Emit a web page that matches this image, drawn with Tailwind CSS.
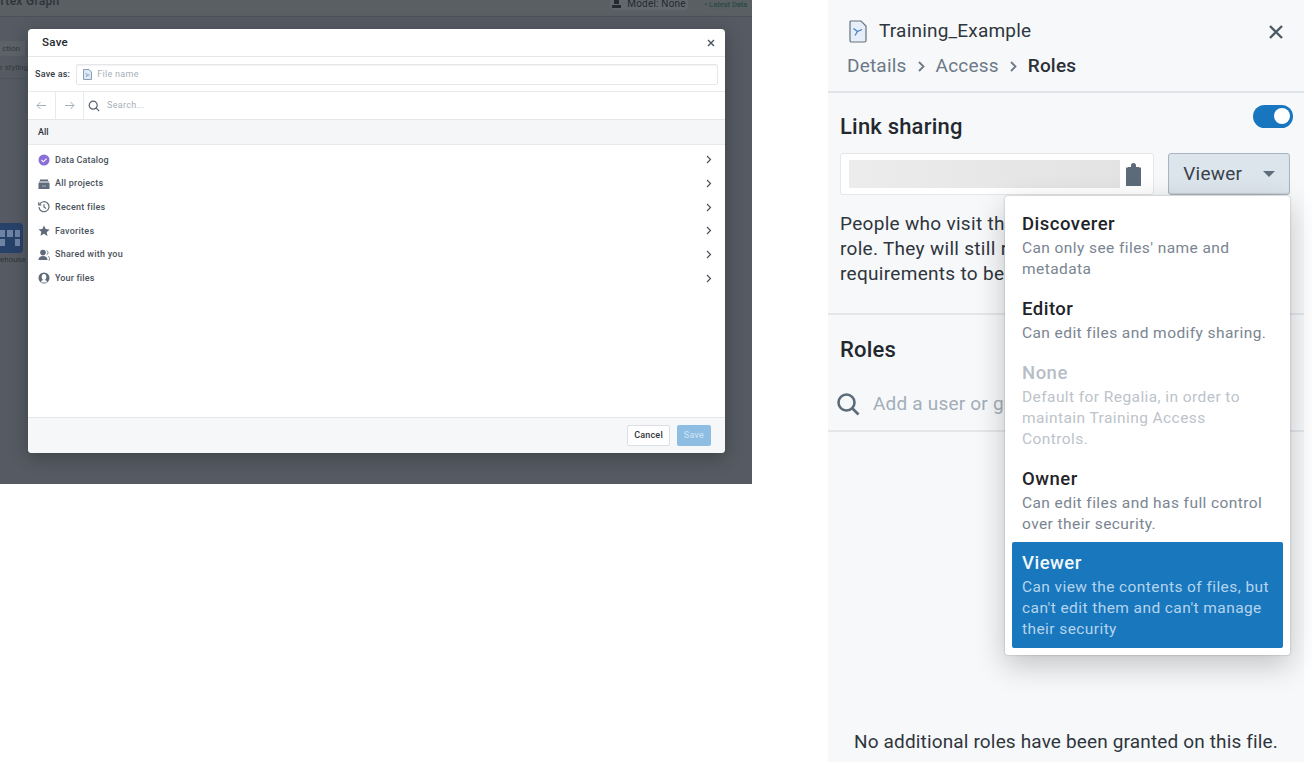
<!DOCTYPE html>
<html lang="en">
<head>
<meta charset="UTF-8">
<title>Save and Roles</title>
<script src="https://cdn.jsdelivr.net/npm/@tailwindcss/browser@4"></script>
</head>
<body class="bg-white font-['Roboto','Liberation_Sans',sans-serif] overflow-hidden">
<div class="w-[1312px] h-[764px] flex items-start">

  <!-- left: save dialog over the graph page -->
  <div class="relative w-[752px] h-[484px] shrink-0 bg-[#565b63] overflow-hidden">
    <div class="h-[17px] flex justify-between items-start border-b border-[#4c5157] bg-[#5a5f63]">
      <span class="text-[12px] leading-[12px] -ml-[14px] -mt-[5px] font-medium tracking-[0.3px] text-[#2f3338]">Vertex Graph</span>
      <div class="flex gap-[14px] pr-[2px]">
        <div class="h-[14px] w-[78px] -mt-[4px] flex items-center justify-center gap-[6px] bg-[#62676d] rounded-sm text-[10px] tracking-[0.2px] text-[#26292d]">
          <svg width="9" height="9" viewBox="0 0 9 9"><path d="M2 0h5v5H2zM0 6h9v3H0z" fill="#26292d"/></svg>
          <span>Model: None</span>
        </div>
        <div class="h-[16px] w-[48px] -mt-[4px] pt-[1px] flex items-center justify-center border border-[#566561] rounded-sm text-[7.5px] font-medium text-[#2b4a44]">• Latest Data</div>
      </div>
    </div>
    <div class="absolute left-0 top-[41px] w-[25px] h-[15px] bg-[#5d6269] text-[8px] text-[#33383e] flex items-center justify-end pr-[5px] overflow-hidden whitespace-nowrap">ction</div>
    <div class="absolute left-0 top-[62px] w-[28px] h-[17px] border-b border-[#4e5359] text-[8px] leading-[12px] text-[#33383e] overflow-hidden whitespace-nowrap text-right">r styling</div>
    <div class="absolute left-0 top-[223px] w-[23px] h-[30px] bg-[#27426a] rounded-r-sm grid grid-cols-3 gap-[2px] py-[7px] pr-[3px]">
      <span class="bg-[#6f83a3]"></span><span class="bg-[#6f83a3]"></span><span class="bg-[#6f83a3]"></span>
      <span class="bg-[#6f83a3]"></span><span class="bg-[#27426a]"></span><span class="bg-[#6f83a3]"></span>
    </div>
    <div class="absolute left-0 top-[255px] w-[26px] text-[8px] leading-[10px] text-[#2f3338] overflow-hidden whitespace-nowrap text-right">ehouse</div>

    <div class="absolute left-[28px] top-[29px] w-[697px] h-[424px] bg-white rounded-[4px] flex flex-col overflow-hidden shadow-[0_4px_18px_rgba(0,0,0,0.3)]">
      <div class="h-[28px] shrink-0 flex items-center justify-between pl-[14px] pr-[10px] border-b border-[#e4e6e9]">
        <span class="pt-[1px] text-[11.5px] font-medium tracking-[0.3px] text-[#23282e]">Save</span>
        <svg width="8" height="8" viewBox="0 0 8 8" fill="none" stroke="#4a525c" stroke-width="1.4"><path d="M1 1l6 6M7 1L1 7"/></svg>
      </div>
      <div class="h-[35px] shrink-0 flex items-center gap-[6px] pl-[7px] pr-[7px] border-b border-[#e8eaed]">
        <span class="pt-[1px] text-[9px] font-medium tracking-[0.2px] text-[#333a42]">Save as:</span>
        <div class="flex-1 h-[21px] flex items-center gap-[5px] pl-[6px] border border-[#e4e6e9] rounded-[2px] shadow-[inset_0_1px_1px_rgba(0,0,0,0.05)]">
          <svg width="9" height="11" viewBox="0 0 9 11" fill="#dfe9f5" stroke="#6d87a8" stroke-width="0.8"><path d="M0.5 0.5h5.5l2.5 2.5v7.5h-8z"/><path d="M2.5 4l2 2-1.5 2M4.5 6h2" fill="none"/></svg>
          <span class="pt-[1px] text-[9px] tracking-[0.3px] text-[#a7afb9]">File name</span>
        </div>
      </div>
      <div class="h-[28px] shrink-0 flex items-stretch border-b border-[#e4e6e9]">
        <div class="w-[28px] flex items-center justify-center border-r border-[#e8eaed]">
          <svg width="11" height="9" viewBox="0 0 11 9" fill="none" stroke="#a7afb9" stroke-width="1"><path d="M10 4.5H1M4.5 1L1 4.5 4.5 8"/></svg>
        </div>
        <div class="w-[28px] flex items-center justify-center border-r border-[#e8eaed]">
          <svg width="11" height="9" viewBox="0 0 11 9" fill="none" stroke="#a7afb9" stroke-width="1"><path d="M1 4.5h9M6.5 1L10 4.5 6.5 8"/></svg>
        </div>
        <div class="flex items-center gap-[7px] pl-[4px]">
          <svg width="12" height="12" viewBox="0 0 12 12" fill="none" stroke="#57616d" stroke-width="1.2"><circle cx="5.2" cy="5.2" r="4"/><path d="M8.2 8.2L11.2 11.2"/></svg>
          <span class="pt-[1px] text-[9px] tracking-[0.3px] text-[#a7afb9]">Search...</span>
        </div>
      </div>
      <div class="h-[25px] shrink-0 flex items-center pl-[10px] pt-[1px] bg-[#f5f6f8] border-b border-[#e8eaed] text-[9px] font-medium text-[#2e343b]">All</div>

      <div class="flex-1 pt-[3px] flex flex-col">
        <div class="h-[23.7px] flex items-center pl-[10px] pr-[13px] gap-[5px]">
          <svg width="12" height="12" viewBox="0 0 12 12"><circle cx="6" cy="6" r="5.5" fill="#8a6fd6"/><path d="M3.5 6l1.8 1.8L8.6 4.6" fill="none" stroke="#fff" stroke-width="1.1"/></svg>
          <span class="flex-1 pt-[1px] text-[9px] font-medium tracking-[0.15px] text-[#4a525c]">Data Catalog</span>
          <svg width="6" height="9" viewBox="0 0 6 9" fill="none" stroke="#4b535d" stroke-width="1.2"><path d="M1 1l3.5 3.5L1 8"/></svg>
        </div>
        <div class="h-[23.7px] flex items-center pl-[10px] pr-[13px] gap-[5px]">
          <svg width="12" height="12" viewBox="0 0 12 12" fill="#5f6b7a"><path d="M2 1.5h8v1.5H2zM1 3.5h10v1H1z"/><path d="M0.5 5h11v6h-11z"/><path d="M4 7.5h4v1H4z" fill="#a9b2bd"/></svg>
          <span class="flex-1 pt-[1px] text-[9px] font-medium tracking-[0.25px] text-[#4a525c]">All projects</span>
          <svg width="6" height="9" viewBox="0 0 6 9" fill="none" stroke="#4b535d" stroke-width="1.2"><path d="M1 1l3.5 3.5L1 8"/></svg>
        </div>
        <div class="h-[23.7px] flex items-center pl-[10px] pr-[13px] gap-[5px]">
          <svg width="12" height="12" viewBox="0 0 12 12" fill="none" stroke="#5f6b7a" stroke-width="1.2"><path d="M1.5 3.5A5 5 0 1 1 1 6"/><path d="M0.7 1.2v2.6h2.6"/><path d="M6 3.2V6l2 1.4"/></svg>
          <span class="flex-1 pt-[1px] text-[9px] font-medium tracking-[0.25px] text-[#4a525c]">Recent files</span>
          <svg width="6" height="9" viewBox="0 0 6 9" fill="none" stroke="#4b535d" stroke-width="1.2"><path d="M1 1l3.5 3.5L1 8"/></svg>
        </div>
        <div class="h-[23.7px] flex items-center pl-[10px] pr-[13px] gap-[5px]">
          <svg width="12" height="12" viewBox="0 0 12 12" fill="#5f6b7a"><path d="M6 0.5l1.7 3.6 3.9.5-2.9 2.7.8 3.9L6 8.8l-3.5 1.9.8-3.9L.4 4.6l3.9-.5z"/></svg>
          <span class="flex-1 pt-[1px] text-[9px] font-medium tracking-[0.25px] text-[#4a525c]">Favorites</span>
          <svg width="6" height="9" viewBox="0 0 6 9" fill="none" stroke="#4b535d" stroke-width="1.2"><path d="M1 1l3.5 3.5L1 8"/></svg>
        </div>
        <div class="h-[23.7px] flex items-center pl-[10px] pr-[13px] gap-[5px]">
          <svg width="12" height="12" viewBox="0 0 12 12" fill="#5f6b7a"><circle cx="5" cy="3.6" r="2.8"/><path d="M0.5 11c0-2.6 1.8-4 4.5-4s4.5 1.4 4.5 4z"/><path d="M8.6 1.5a2.4 2.4 0 0 1 0 4.4M10 7.2c1 .5 1.7 1.8 1.7 3.8h-1.2" fill="none" stroke="#5f6b7a" stroke-width="0.8"/></svg>
          <span class="flex-1 pt-[1px] text-[9px] font-medium tracking-[0.25px] text-[#4a525c]">Shared with you</span>
          <svg width="6" height="9" viewBox="0 0 6 9" fill="none" stroke="#4b535d" stroke-width="1.2"><path d="M1 1l3.5 3.5L1 8"/></svg>
        </div>
        <div class="h-[23.7px] flex items-center pl-[10px] pr-[13px] gap-[5px]">
          <svg width="12" height="12" viewBox="0 0 12 12"><circle cx="6" cy="6" r="5.5" fill="#5f6b7a"/><ellipse cx="6" cy="5" rx="2.3" ry="2.9" fill="#fff"/><path d="M2.8 10.4c.4-1.8 1.6-2.6 3.2-2.6s2.8.8 3.2 2.6z" fill="#fff"/></svg>
          <span class="flex-1 pt-[1px] text-[9px] font-medium tracking-[0.15px] text-[#4a525c]">Your files</span>
          <svg width="6" height="9" viewBox="0 0 6 9" fill="none" stroke="#4b535d" stroke-width="1.2"><path d="M1 1l3.5 3.5L1 8"/></svg>
        </div>
      </div>

      <div class="h-[36px] shrink-0 flex items-center justify-end gap-[7px] pr-[14px] bg-[#f5f7f9] border-t border-[#e4e6e9]">
        <div class="w-[43px] h-[21px] flex items-center justify-center bg-white border border-[#dcdfe3] rounded-[2px] text-[9px] font-medium tracking-[0.2px] text-[#2e343b]">Cancel</div>
        <div class="w-[34px] h-[21px] flex items-center justify-center bg-[#8dbde3] rounded-[2px] text-[9px] font-medium tracking-[0.2px] text-[#c6dff2]">Save</div>
      </div>
    </div>
  </div>

  <!-- right: sharing panel -->
  <div class="relative ml-[76px] w-[476px] h-[762px] shrink-0 bg-[#f6f8fa] flex flex-col">
    <div class="h-[93px] shrink-0 border-b-2 border-[#e1e4e8] pl-[19px] pr-[21px] pt-[19px]">
      <div class="flex items-center h-[25px]">
        <svg class="ml-[2px]" width="18" height="23" viewBox="0 0 18 23" fill="#e6eff9" stroke="#66717d" stroke-width="1.2"><path d="M2 1h10l5 5v14.500a1.500 1.500 0 0 1-1.500 1.500h-13.500a1.500 1.500 0 0 1-1-1.500V2a1 1 0 0 1 1-1z"/><path d="M4.500 8.500l4 3-2.500 4M8.500 11.500l4.500-2" fill="none" stroke="#3f7ec2" stroke-width="1.2"/></svg>
        <span class="ml-[12px] flex-1 text-[19px] tracking-[0.2px] text-[#30363d]">Training_Example</span>
        <svg width="14" height="14" viewBox="0 0 14 14" fill="none" stroke="#4f5a66" stroke-width="2.4"><path d="M1 1l12 12M13 1L1 13"/></svg>
      </div>
      <div class="mt-[8px] flex items-center text-[19px] tracking-[0.2px]">
        <span class="text-[#6d7986]">Details</span>
        <svg class="mx-[11px]" width="7" height="11" viewBox="0 0 7 11" fill="none" stroke="#6d7986" stroke-width="1.8"><path d="M1 1l4.500 4.500L1 10"/></svg>
        <span class="text-[#6d7986]">Access</span>
        <svg class="mx-[11px]" width="7" height="11" viewBox="0 0 7 11" fill="none" stroke="#6d7986" stroke-width="1.8"><path d="M1 1l4.500 4.500L1 10"/></svg>
        <span class="font-medium text-[#2b3036]">Roles</span>
      </div>
    </div>

    <div class="h-[222px] shrink-0 border-b-2 border-[#e4e7ea] pl-[12px] pr-[14px]">
      <div class="flex items-center justify-between h-[60px]">
        <span class="text-[22px] font-medium tracking-[0.2px] text-[#23282e] translate-y-[3px]">Link sharing</span>
        <div class="w-[40px] h-[23px] rounded-full bg-[#1876be] flex items-center justify-end pr-[3px] -translate-y-[7px] -mr-[3px]">
          <span class="w-[16px] h-[16px] rounded-full bg-white"></span>
        </div>
      </div>
      <div class="flex gap-[14px] h-[42px]">
        <div class="w-[315px] flex items-center pl-[8px] pr-[11px] bg-white border border-[#e4e7ea] rounded-[3px]">
          <div class="flex-1 h-[28px] bg-gradient-to-r from-[#ececec] to-[#e3e3e3]"></div>
          <svg class="ml-[5px]" width="17" height="23" viewBox="0 0 17 23" fill="#5c6b7a"><path d="M6 2.500a2.500 2.500 0 0 1 5 0V4h3v2H3V4h3z"/><path d="M1 4.500h15V23H1z"/></svg>
        </div>
        <div class="w-[122px] flex items-center pl-[14px] gap-[21px] bg-[#dde5ec] border border-[#a8b4bf] rounded-[3px] shadow-[inset_0_-1px_1px_rgba(0,0,0,0.1)]">
          <span class="text-[19px] tracking-[0.2px] text-[#3a424b]">Viewer</span>
          <span class="w-0 h-0 border-x-[6px] border-x-transparent border-t-[6px] border-t-[#5f6d7a]"></span>
        </div>
      </div>
      <p class="mt-[16px] w-[165px] overflow-hidden whitespace-nowrap text-[19px] leading-[25px] tracking-[0.3px] text-[#2f353c]">People who visit the<br>role. They will still r<br>requirements to be</p>
    </div>

    <div class="h-[117px] shrink-0 border-b-2 border-[#e4e7ea] pl-[12px]">
      <div class="h-[68px] flex items-center text-[22px] font-medium tracking-[0.2px] text-[#23282e]">Roles</div>
      <div class="flex items-center h-[36px] pt-[6px] gap-[13px] -ml-[4px]">
        <svg class="shrink-0" width="24" height="24" viewBox="0 0 24 24" fill="none" stroke="#5c6b7a" stroke-width="2.6"><circle cx="10.500" cy="10.500" r="8"/><path d="M16.500 16.500l6 6"/></svg>
        <span class="w-[133px] overflow-hidden whitespace-nowrap text-[19px] tracking-[0.2px] text-[#a3adb8]">Add a user or gr</span>
      </div>
    </div>

    <div class="flex-1 flex items-end justify-center pb-[6px] text-[19px] tracking-[0.15px] text-[#2f353c]">No additional roles have been granted on this file.</div>

    <!-- role menu -->
    <div class="absolute left-[177px] top-[196px] w-[285px] h-[459px] bg-white rounded-[3px] px-[7px] pt-[14px] shadow-[0_10px_30px_rgba(0,0,0,0.22),0_0_2px_rgba(0,0,0,0.3)] flex flex-col">
      <div class="h-[85px] px-[10px]">
        <div class="text-[18.5px] leading-[28px] font-medium tracking-[0.5px] text-[#1f2429]">Discoverer</div>
        <div class="text-[15.5px] leading-[21px] tracking-[0.42px] text-[#7a8591]">Can only see files' name and metadata</div>
      </div>
      <div class="h-[64px] px-[10px]">
        <div class="text-[18.5px] leading-[28px] font-medium tracking-[0.5px] text-[#1f2429]">Editor</div>
        <div class="text-[15.5px] leading-[21px] tracking-[0.42px] text-[#7a8591]">Can edit files and modify sharing.</div>
      </div>
      <div class="h-[106px] px-[10px]">
        <div class="text-[18.5px] leading-[28px] font-medium tracking-[0.5px] text-[#b7bec6]">None</div>
        <div class="text-[15.5px] leading-[21px] tracking-[0.42px] text-[#bcc3ca]">Default for Regalia, in order to<br>maintain Training Access<br>Controls.</div>
      </div>
      <div class="h-[77px] px-[10px]">
        <div class="text-[18.5px] leading-[28px] font-medium tracking-[0.5px] text-[#1f2429]">Owner</div>
        <div class="text-[15.5px] leading-[21px] tracking-[0.42px] text-[#7a8591]">Can edit files and has full control<br>over their security.</div>
      </div>
      <div class="h-[106px] px-[10px] pt-[7px] bg-[#1877bd] rounded-[2px]">
        <div class="text-[18.5px] leading-[28px] font-medium tracking-[0.5px] text-[#f2f7fb]">Viewer</div>
        <div class="text-[15.5px] leading-[21px] tracking-[0.42px] text-[#b5d4ec]">Can view the contents of files, but<br>can't edit them and can't manage<br>their security</div>
      </div>
    </div>
  </div>
</div>
</body>
</html>
